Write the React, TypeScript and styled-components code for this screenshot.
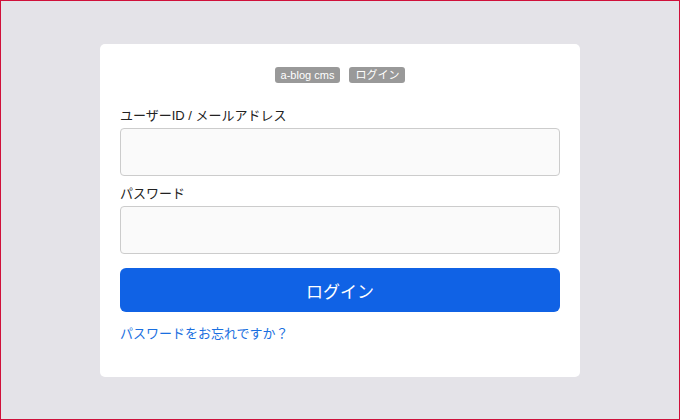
import React from 'react';
import styled, { createGlobalStyle } from 'styled-components';

const GlobalStyle = createGlobalStyle`
  html, body {
    margin: 0;
    padding: 0;
  }
  body {
    font-family: "Liberation Sans", "Noto Sans CJK JP", sans-serif;
    color: #222;
  }
`;

const Page = styled.div`
  box-sizing: border-box;
  width: 680px;
  height: 420px;
  background-color: #e4e3e8;
  border: 1px solid #d0103a;
  display: flex;
  justify-content: center;
  padding-top: 43px;
`;

const Card = styled.div`
  box-sizing: border-box;
  width: 480px;
  height: 333px;
  background-color: #fff;
  border-radius: 5px;
  padding: 23px 20px 0;
`;

const Badges = styled.div`
  display: flex;
  justify-content: center;
  gap: 9px;
  margin-bottom: 24px;
`;

const Badge = styled.span`
  display: inline-block;
  background-color: #999;
  color: #fff;
  font-size: 11px;
  line-height: 16px;
  padding: 0 6px;
  border-radius: 3px;
`;

const Field = styled.div`
  margin-bottom: 9px;
`;

const Label = styled.label`
  display: block;
  font-size: 13px;
  line-height: 18px;
  margin-bottom: 3px;
`;

const Input = styled.input`
  box-sizing: border-box;
  display: block;
  width: 440px;
  height: 48px;
  border: 1px solid #ccc;
  border-radius: 4px;
  background-color: #fafafa;
  font-size: 16px;
`;

const Button = styled.button`
  display: block;
  width: 440px;
  height: 44px;
  margin-top: 14px;
  border: none;
  border-radius: 6px;
  background-color: #1062e5;
  color: #fff;
  font-family: inherit;
  font-size: 17px;
  cursor: pointer;
`;

const Forgot = styled.a`
  display: inline-block;
  margin-top: 12px;
  font-size: 13px;
  line-height: 19px;
  color: #1a6fe0;
  text-decoration: none;
`;

const App = () => (
  <>
    <GlobalStyle />
    <Page>
      <Card>
        <Badges>
          <Badge>a-blog cms</Badge>
          <Badge>ログイン</Badge>
        </Badges>
        <Field>
          <Label>ユーザーID / メールアドレス</Label>
          <Input type="text" />
        </Field>
        <Field>
          <Label>パスワード</Label>
          <Input type="password" />
        </Field>
        <Button>ログイン</Button>
        <Forgot href="#">パスワードをお忘れですか？</Forgot>
      </Card>
    </Page>
  </>
);

export default App;
